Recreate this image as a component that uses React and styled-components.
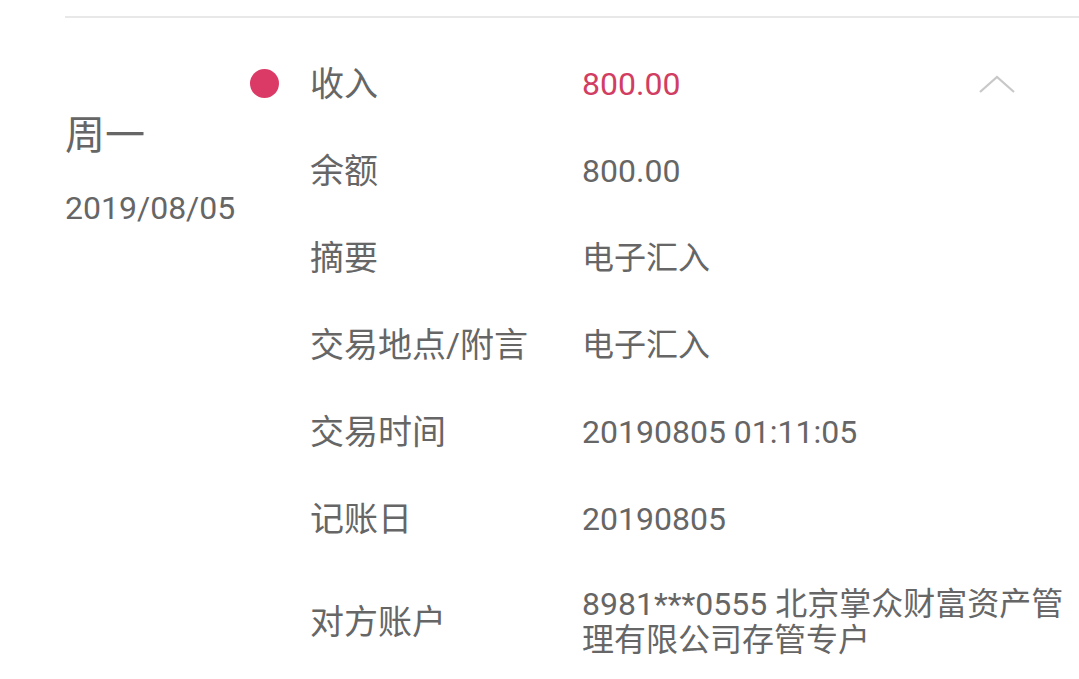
import styled, { createGlobalStyle } from "styled-components"

const Global = createGlobalStyle`
    body {
        margin: 0;
        background: #fff;
        font-family: Roboto, "Noto Sans CJK SC", sans-serif;
        color: #666;
    }
`

const Page = styled.div`
    padding-left: 65px;
    padding-top: 16px;
`

const Divider = styled.div`
    height: 2px;
    background: #e8e8e8;
`

const Entry = styled.div`
    display: flex;
    flex-direction: row;
    padding-top: 22px;
`

const DateCol = styled.div`
    width: 185px;
    padding-top: 74px;
    display: flex;
    flex-direction: column;
`

const Weekday = styled.div`
    font-size: 40px;
    line-height: 44px;
    color: #666;
`

const DateText = styled.div`
    font-size: 32px;
    line-height: 40px;
    margin-top: 30px;
`

const Rows = styled.div`
    flex: 1;
    display: flex;
    flex-direction: column;
`

const Row = styled.div`
    position: relative;
    display: flex;
    flex-direction: row;
    align-items: center;
    min-height: 87px;
`

const DotCol = styled.div`
    width: 60px;
    display: flex;
    align-items: center;
`

const Dot = styled.div`
    width: 29px;
    height: 29px;
    border-radius: 50%;
    background: #dc3a66;
`

const Label = styled.div`
    width: 272px;
    font-size: 34px;
    line-height: 36px;
`

const Value = styled.div`
    flex: 1;
    font-size: 32px;
    line-height: 36px;
    color: ${p => p.$accent ? "#d23d63" : "#666"};
    padding-right: 14px;
    ${p => p.$multi && "padding-top: 24px; padding-bottom: 24px;"}
`

const Chevron = styled.svg`
    position: absolute;
    right: 63px;
    top: 34px;
`

const rows = [
    ["余额", "800.00"],
    ["摘要", "电子汇入"],
    ["交易地点/附言", "电子汇入"],
    ["交易时间", "20190805 01:11:05"],
    ["记账日", "20190805"],
]

export default function App() {
    return (
        <Page>
            <Global />
            <Divider />
            <Entry>
                <DateCol>
                    <Weekday>周一</Weekday>
                    <DateText>2019/08/05</DateText>
                </DateCol>
                <Rows>
                    <Row>
                        <DotCol><Dot /></DotCol>
                        <Label>收入</Label>
                        <Value $accent>800.00</Value>
                        <Chevron width="38" height="20" viewBox="0 0 38 20">
                            <path d="M2 18 L19 3 L36 18" fill="none" stroke="#c8c8c8" strokeWidth="2.2" />
                        </Chevron>
                    </Row>
                    {rows.map(([k, v]) => (
                        <Row key={k}>
                            <DotCol />
                            <Label>{k}</Label>
                            <Value>{v}</Value>
                        </Row>
                    ))}
                    <Row>
                        <DotCol />
                        <Label>对方账户</Label>
                        <Value $multi>8981***0555 北京掌众财富资产管理有限公司存管专户</Value>
                    </Row>
                </Rows>
            </Entry>
        </Page>
    )
}
